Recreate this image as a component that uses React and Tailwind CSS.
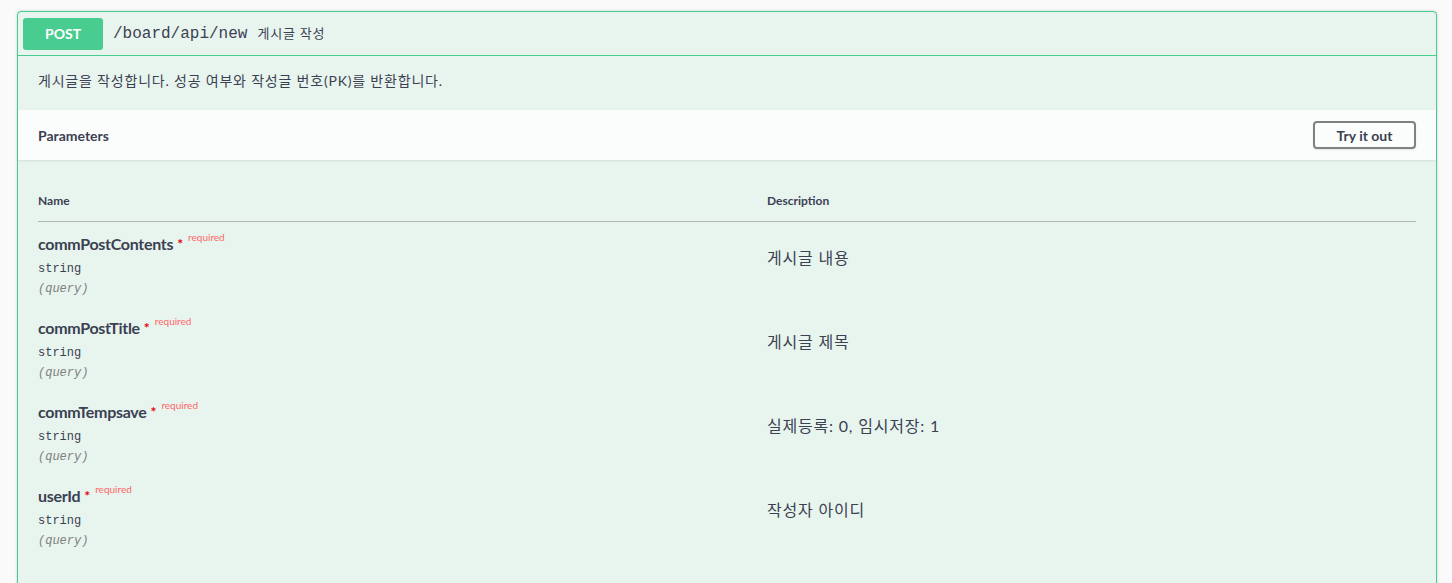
import React from 'react';

const PARAMS = [
  { name: 'commPostContents', type: 'string', in: '(query)', description: '게시글 내용' },
  { name: 'commPostTitle', type: 'string', in: '(query)', description: '게시글 제목' },
  { name: 'commTempsave', type: 'string', in: '(query)', description: '실제등록: 0, 임시저장: 1' },
  { name: 'userId', type: 'string', in: '(query)', description: '작성자 아이디' }
];

const sans = "font-['Lato','Noto_Sans_CJK_KR',sans-serif]";
const mono = "font-['Liberation_Mono','DejaVu_Sans_Mono',monospace]";

const ParamRow = ({ param }) => (
  <div className="grid grid-cols-[729px_1fr] h-[84px]">
    <div className="pt-3">
      <div className="h-5 flex items-start text-[16px] leading-5 font-bold text-[#3b4151]">
        <span className="tracking-[-0.3px]">{param.name}</span>
        <span className="ml-[4px] text-red-600 text-[14px] leading-5">*</span>
        <span className="ml-[5px] -mt-[3px] text-[10px] leading-3 font-normal text-[#ff6666]">required</span>
      </div>
      <div className={`${mono} mt-[6px] h-[18px] text-[12px] leading-[18px] text-[#3b4151]`}>
        {param.type}
      </div>
      <div className={`${mono} mt-[2px] h-[18px] text-[12px] leading-[18px] italic text-[#808080]`}>
        {param.in}
      </div>
    </div>
    <div className="pt-6 text-[16px] leading-6 tracking-[0.8px] text-[#3b4151]">{param.description}</div>
  </div>
);

export default function App() {
  return (
    <div className={`${sans} min-h-[583px] bg-[#fafafa] pl-[17px] pr-[15px] pt-[11px]`}>
      <div className="border border-[#49cc90] rounded-[4px] bg-[#e8f5ef] shadow-[0_0_3px_rgba(0,0,0,0.19)]">
        <div className="flex items-center h-[44px] px-[5px] border-b border-[#49cc90]">
          <span className="w-[80px] h-[32px] flex items-center justify-center rounded-[3px] bg-[#49cc90] text-white text-[14px] font-bold">
            POST
          </span>
          <span className={`${mono} ml-[10px] text-[16px] text-[#3b4151]`}>/board/api/new</span>
          <span className="ml-[10px] text-[13px] tracking-[0.8px] text-[#3b4151]">게시글 작성</span>
        </div>

        <div className="px-5 pt-4 pb-5 text-[14px] leading-[18px] tracking-[0.8px] text-[#3b4151]">
          게시글을 작성합니다. 성공 여부와 작성글 번호(PK)를 반환합니다.
        </div>

        <div className="flex items-center justify-between h-[50px] px-5 bg-[#fbfdfc] shadow-[0_1px_2px_rgba(0,0,0,0.1)]">
          <h4 className="text-[14px] font-bold text-[#3b4151]">Parameters</h4>
          <button
            type="button"
            className="w-[103px] h-[28px] border-2 border-[#808080] rounded-[4px] bg-transparent text-[14px] font-bold text-[#3b4151] shadow-[0_1px_2px_rgba(0,0,0,0.1)]"
          >
            Try it out
          </button>
        </div>

        <div className="px-5 pt-[21px] pb-10">
          <div className="grid grid-cols-[729px_1fr] h-[41px] items-center border-b border-[#b1b6b3] text-[12px] font-bold text-[#3b4151]">
            <div>Name</div>
            <div>Description</div>
          </div>
          {PARAMS.map(param => (
            <ParamRow key={param.name} param={param} />
          ))}
        </div>
      </div>
    </div>
  );
}
